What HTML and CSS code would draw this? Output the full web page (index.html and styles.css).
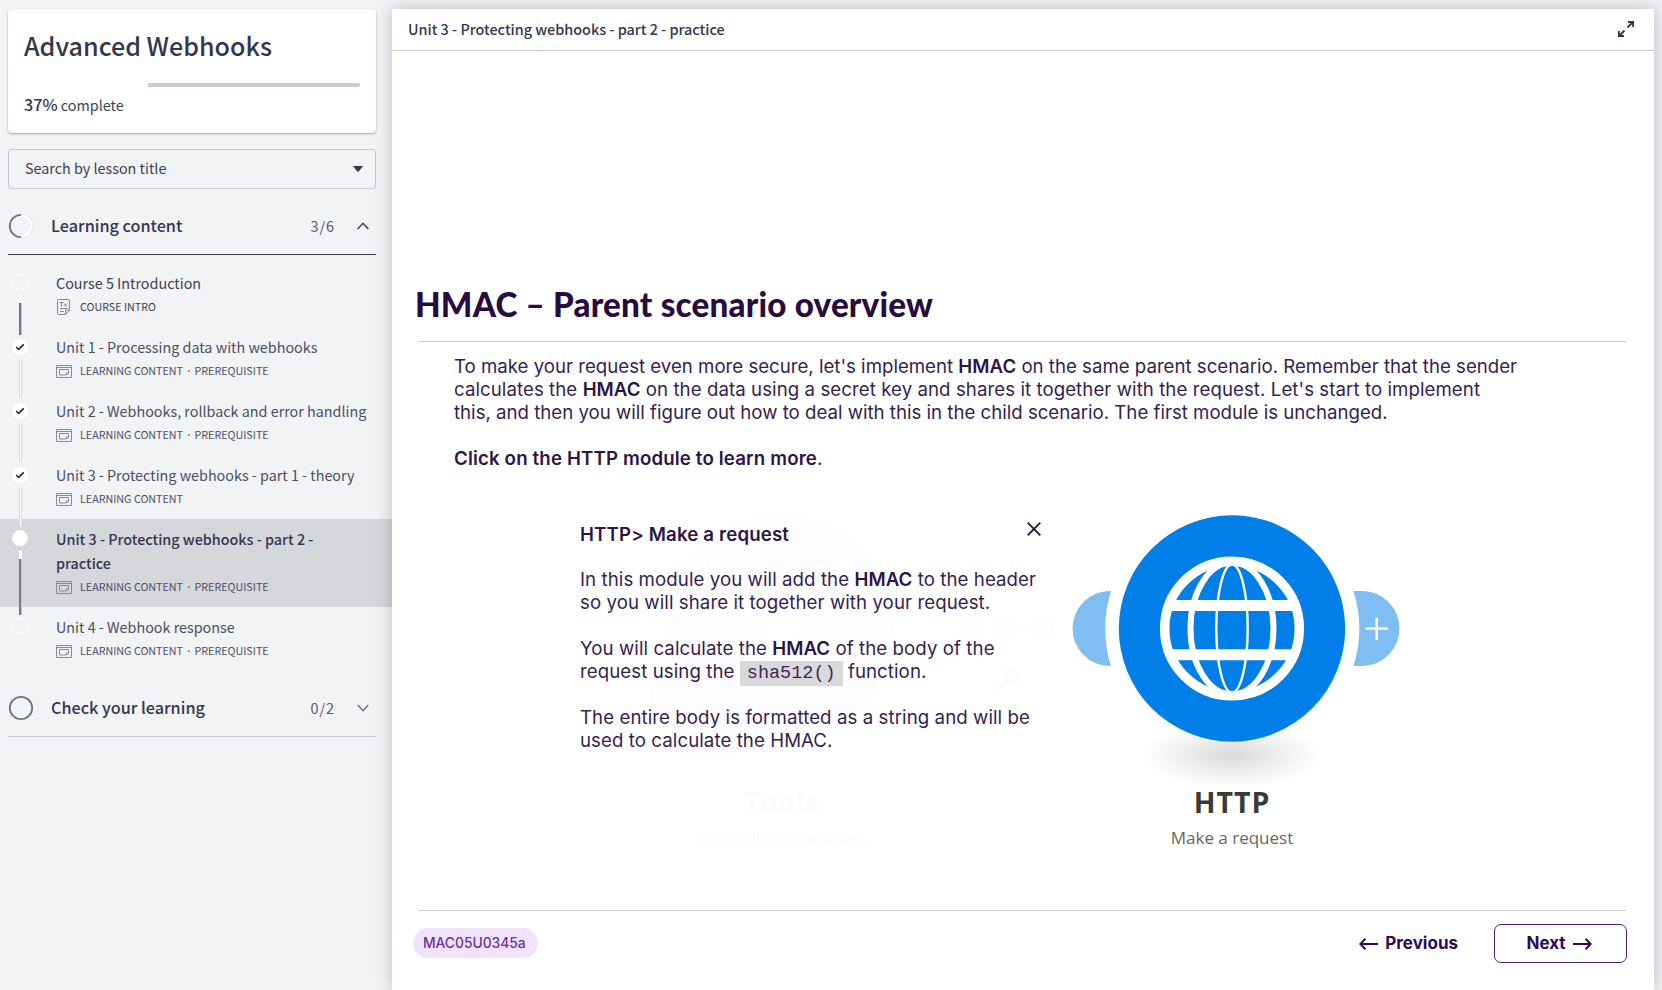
FILE: index.html
```html
<!DOCTYPE html>
<html lang="en">
<head>
<meta charset="utf-8">
<title>Advanced Webhooks</title>
<link rel="stylesheet" href="styles.css">
</head>
<body>
<svg class="sprite" width="0" height="0">
  <symbol id="ic-content" viewBox="0 0 16 13">
    <path d="M.5.5h15v12H.5zM.5 2.5h15M3.500 4.500h9v3.500l-2 2h-7zM12.500 8h-2v2" fill="none" stroke="currentColor"/>
  </symbol>
  <symbol id="ic-check" viewBox="0 0 16 16">
    <path d="M4.300 8l2.300 2.400 5.200-5" fill="none" stroke="#222" stroke-width="1.500"/>
  </symbol>
</svg>
<div class="page">
  <aside class="sidebar">
    <section class="card">
      <h1 class="card-title">Advanced Webhooks</h1>
      <div class="progress"><div class="progress-done" style="width:37%"></div></div>
      <p class="card-status"><strong>37%</strong> complete</p>
    </section>
    <div class="search"><span>Search by lesson title</span>
      <svg width="10" height="6" viewBox="0 0 10 6"><path d="M0 0h10L5.800 5.500h-1.600z" fill="#34364f"/></svg>
    </div>
    <div class="section section-open">
      <svg class="section-ring" width="26" height="26" viewBox="0 0 26 26" fill="none">
        <circle cx="13" cy="13" r="11.300" stroke="#d9dbe0" stroke-width="1.600"/><circle cx="13" cy="13" r="10.600" stroke="#fff" stroke-width="1.800"/>
        <path d="M13 1.800a11.200 11.200 0 0 0 0 22.400" stroke="#6f7187" stroke-width="1.800"/></svg>
      <h2 class="section-title">Learning content</h2>
      <span class="section-count">3/6</span>
      <svg width="12" height="8" viewBox="0 0 12 8"><path d="M.7 7L6 1.300 11.300 7" fill="none" stroke="#3d3f57" stroke-width="1.500"/></svg>
    </div>
    <ul class="lessons">
      <li class="lesson lesson-intro">
        <div class="rail"><span class="dot"></span><span class="line line-todo"></span></div>
        <div class="lesson-text"><div class="lesson-title">Course 5 Introduction</div>
          <div class="lesson-meta"><svg class="doc" width="16" height="16" viewBox="0 0 16 16" fill="none" stroke="currentColor">
            <path d="M2.500.5h9.500q1.500 0 1.500 1.500v9l-4 4.500h-7q-1 0-1-1V1.500q0-1 1-1zM13.500 11h-4v4.500M3.500 3.500h4M5.500 3.500v4M8 4.500l3 3M11 4.500l-3 3M4 9.500h7.500M4 12.500h4"/></svg>COURSE INTRO</div></div>
      </li>
      <li class="lesson">
        <div class="rail"><span class="dot dot-full dot-checked"><svg><use href="#ic-check"/></svg></span><span class="line"></span></div>
        <div class="lesson-text"><div class="lesson-title">Unit 1 - Processing data with webhooks</div>
          <div class="lesson-meta"><svg><use href="#ic-content"/></svg>LEARNING CONTENT<i>·</i>PREREQUISITE</div></div>
      </li>
      <li class="lesson">
        <div class="rail"><span class="dot dot-full dot-checked"><svg><use href="#ic-check"/></svg></span><span class="line"></span></div>
        <div class="lesson-text"><div class="lesson-title">Unit 2 - Webhooks, rollback and error handling</div>
          <div class="lesson-meta"><svg><use href="#ic-content"/></svg>LEARNING CONTENT<i>·</i>PREREQUISITE</div></div>
      </li>
      <li class="lesson">
        <div class="rail"><span class="dot dot-full dot-checked"><svg><use href="#ic-check"/></svg></span><span class="line"></span></div>
        <div class="lesson-text"><div class="lesson-title">Unit 3 - Protecting webhooks - part 1 - theory</div>
          <div class="lesson-meta"><svg><use href="#ic-content"/></svg>LEARNING CONTENT</div></div>
      </li>
      <li class="lesson lesson-active">
        <div class="rail"><span class="dot dot-full"></span><span class="line line-todo"></span></div>
        <div class="lesson-text"><div class="lesson-title">Unit 3 - Protecting webhooks - part 2 -<br>practice</div>
          <div class="lesson-meta"><svg><use href="#ic-content"/></svg>LEARNING CONTENT<i>·</i>PREREQUISITE</div></div>
      </li>
      <li class="lesson">
        <div class="rail"><span class="dot"></span></div>
        <div class="lesson-text"><div class="lesson-title">Unit 4 - Webhook response</div>
          <div class="lesson-meta"><svg><use href="#ic-content"/></svg>LEARNING CONTENT<i>·</i>PREREQUISITE</div></div>
      </li>
    </ul>
    <div class="section">
      <svg class="section-ring" width="26" height="26" viewBox="0 0 26 26" fill="none"><circle cx="13" cy="13" r="11.200" stroke="#6f7187" stroke-width="1.800"/></svg>
      <h2 class="section-title">Check your learning</h2>
      <span class="section-count">0/2</span>
      <svg width="12" height="8" viewBox="0 0 12 8"><path d="M.7 1L6 6.700 11.300 1" fill="none" stroke="#6f7187" stroke-width="1.500"/></svg>
    </div>
  </aside>

  <main class="viewer">
    <header class="viewer-head">
      <span>Unit 3 - Protecting webhooks - part 2 - practice</span>
      <svg width="16" height="16" viewBox="0 0 16 16" fill="none" stroke="#34364f" stroke-width="1.800"><path d="M9.500 6.500L15 1M10 1h5.100v5M6.500 9.500L1 15M6 15H.9v-5"/></svg>
    </header>
    <article class="slide">
      <h2 class="slide-title">HMAC – Parent scenario overview</h2>
      <div class="intro">
        <p>To make your request even more secure, let's implement <b>HMAC</b> on the same parent scenario. Remember that the sender<br><span class="loose">calculates the <b>HMAC</b> on the data using a secret key and shares it together with the request. Let's start to implement</span><br>this, and then you will figure out how to deal with this in the child scenario. The first module is unchanged.</p>
        <p><b class="prompt">Click on the HTTP module to learn more</b>.</p>
      </div>
      <div class="stage">
        <div class="ghost">
          <svg width="450" height="284" viewBox="620 500 450 284">
            <circle cx="780" cy="628.500" r="113" fill="#fdfdff"/>
            <circle cx="780" cy="625" r="20" fill="#fff"/>
            <path d="M712 560l50 50M848 560l-110 110" stroke="#fff" stroke-width="14"/>
            <circle cx="706" cy="702" r="58" fill="#fdfdff"/>
            <g fill="#fcfdff"><circle cx="971" cy="628.500" r="12"/><circle cx="1006" cy="628.500" r="12"/><circle cx="1041" cy="628.500" r="12"/></g>
            <path d="M997 689l12-11" fill="none" stroke="#fbfbfb" stroke-width="4"/><path d="M1013 670a6 6 0 1 0 4 5" fill="none" stroke="#fbfbfb" stroke-width="4"/>
          </svg>
          <div class="node-name">Tools</div>
          <div class="node-action">Set multiple variables</div>
        </div>
        <section class="panel">
          <svg class="close" width="14" height="14" viewBox="0 0 14 14"><path d="M.7.7l12.600 12.600M13.300.7L.7 13.300" stroke="#2a0f45" stroke-width="1.800"/></svg>
          <p class="panel-title"><b>HTTP&gt; Make a request</b></p>
          <p>In this module you will add the <b>HMAC</b> to the header<br>so you will share it together with your request.</p>
          <p>You will calculate the <b>HMAC</b> of the body of the<br>request using the <code>sha512()</code> function.</p>
          <p>The entire body is formatted as a string and will be<br>used to calculate the HMAC.</p>
        </section>
        <figure class="node">
          <svg width="344" height="284" viewBox="1060 500 344 284">
            <defs><radialGradient id="shade"><stop offset="0" stop-color="#d9d9d9"/><stop offset=".5" stop-color="#ededed"/><stop offset="1" stop-color="#fff"/></radialGradient></defs>
            <ellipse cx="1232" cy="755" rx="90" ry="33" fill="url(#shade)"/>
            <g fill="#80bdf3">
              <path d="M1111 591H1110A37.500 37.500 0 0 0 1110 666H1111A126 126 0 0 1 1111 591z"/>
              <path d="M1353.500 591H1362A37.500 37.500 0 0 1 1362 666H1353.500A126 126 0 0 0 1353.500 591z"/>
            </g>
            <path d="M1365.500 628.500h22.500M1376.700 617.500v22.500" stroke="#f4f9fe" stroke-width="2.600"/>
            <circle cx="1232" cy="628.500" r="113.200" fill="#007fe8"/>
            <g fill="none" stroke="#fff">
              <circle cx="1232" cy="628.500" r="67.300" stroke-width="9.500"/>
              <ellipse cx="1232" cy="628.500" rx="41.500" ry="66" stroke-width="6"/>
              <ellipse cx="1232" cy="628.500" rx="15.700" ry="64" stroke-width="2.400"/>
              <path d="M1171 605.500h122M1171 654.700h122" stroke-width="11"/>
            </g>
          </svg>
          <div class="node-name">HTTP</div>
          <figcaption class="node-action">Make a request</figcaption>
        </figure>
      </div>
      <footer class="slide-foot">
        <span class="tag">MAC05U0345a</span>
        <button class="btn"><svg width="19" height="12" viewBox="0 0 19 12"><path d="M19 6H1.500M6.500.8L1.300 6l5.200 5.200"/></svg>Previous</button>
        <button class="btn btn-outline">Next<svg width="19" height="12" viewBox="0 0 19 12"><path d="M0 6h17.500M12.500.8L17.700 6l-5.200 5.200"/></svg></button>
      </footer>
    </article>
  </main>
</div>
</body>
</html>
```
FILE: styles.css
```css
* { box-sizing: border-box; margin: 0; padding: 0; }
body {
  background: #f1f3f5;
  color: #3d3f57;
  font-family: "Noto Sans CJK SC", "Noto Sans", sans-serif;
  font-size: 14.35px;
  line-height: 24px;
  overflow: hidden;
}
.sprite { position: absolute; }
.page { display: flex; height: 990px; }

/* Sidebar */
.sidebar { width: 392px; flex: none; padding-top: 9px; }
.card {
  margin: 0 16px 0 8px;
  height: 124px;
  padding: 20px 16px 0;
  background: #fff;
  border-radius: 4px;
  box-shadow: 0 1px 2px rgba(40, 42, 60, .4);
}
.card-title { font-size: 25.1px; font-weight: 500; line-height: 32px; color: #34364f; }
.progress { margin-top: 22px; height: 4px; background: #c9cbd7; border-radius: 2px; }
.progress-done { height: 4px; background: #fff; }
.card-status { margin-top: 5px; }
.card-status strong { font-size: 16.2px; font-weight: 500; color: #34364f; }
.search {
  display: flex;
  align-items: center;
  justify-content: space-between;
  margin: 16px 16px 0 8px;
  height: 40px;
  padding: 0 12px 0 16px;
  border: 1px solid #c6c8d5;
  border-radius: 3px;
}
.search span { padding-bottom: 2px; }
.section {
  display: flex;
  align-items: center;
  margin: 0 16px 0 8px;
  height: 58px;
  padding-right: 7px;
  border-bottom: 1px solid #c6c8d5;
}
.section-open { margin-top: 8px; border-color: #34364f; }
.section-title { margin-left: 17px; padding-bottom: 2px; font-size: 16.2px; font-weight: 500; color: #34364f; }
.section-count { margin: 1px 22px 0 auto; letter-spacing: 1px; color: #55576c; }
.lessons { list-style: none; margin: 8px 0 8px; }
.lesson { display: flex; color: #4c4e64; }
.rail {
  position: relative;
  z-index: 1;
  width: 56px;
  flex: none;
  display: flex;
  flex-direction: column;
  padding: 11px 0 0 12px;
}
.dot { width: 16px; height: 16px; flex: none; border: 1px solid #fff; border-radius: 50%; }
.dot-full { background: #fff; }
.dot-checked { margin: 1px 0 -1px; }
.dot svg { display: block; width: 16px; height: 16px; margin: -1px; }
.line {
  flex: 1;
  width: 3px;
  margin: 5px 0 -8px 7px;
  background: #fff;
  border: solid #d9dbdf;
  border-width: 0 1px;
}
.line-todo {
  border: 0;
  background: linear-gradient(#fff 8px, transparent 8px), linear-gradient(90deg, #73758a 2px, #c9cad2 2px);
}
.lesson-text { padding: 8px 0; }
.lesson-title { white-space: nowrap; }
.lesson-meta { display: flex; align-items: center; font-size: 10.72px; }
.lesson-meta svg { width: 16px; height: 13px; margin-right: 8px; color: #85879a; }
.lesson-meta .doc { height: 16px; }
.lesson-meta i { width: 11.5px; text-align: center; font: 12px "Noto Sans", sans-serif; }
.lesson-intro { color: #3d3f57; }
.lesson-active { background: #d5d7db; }
.lesson-active .lesson-title { font-weight: 500; color: #34364f; }

/* Viewer */
.viewer {
  position: relative;
  z-index: 2;
  width: 1262px;
  margin-top: 9px;
  background: #fff;
  box-shadow: 0 0 16px rgba(30, 32, 50, .26);
}
.viewer-head {
  display: flex;
  align-items: center;
  justify-content: space-between;
  height: 42px;
  padding: 0 20px 1px 16px;
  border-bottom: 1px solid #c9cbd7;
  font-size: 14.4px;
  font-weight: 500;
  color: #34364f;
}
.slide {
  padding: 233px 28px 0 27px;
  color: #361e52;
  font: 400 18.65px/23px Inter, sans-serif;
}
.slide-title {
  padding-bottom: 17px;
  border-bottom: 1px solid #cdc8c8;
  text-indent: -4px;
  color: #280b41;
  font: 900 33.2px/40px Lato, sans-serif;
  letter-spacing: .2px;
}
.intro { padding: 13px 0 0 35px; white-space: nowrap; }
.loose { letter-spacing: .07px; }
.slide p + p { margin-top: 23px; }
.slide b { font-weight: 600; color: #2d1548; letter-spacing: .05px; }
.slide .prompt { letter-spacing: .16px; }
.stage { position: relative; display: flex; height: 410px; margin-top: 30px; padding-left: 161px; }
.ghost { position: absolute; left: 202px; top: 0; width: 450px; }
.ghost svg { display: block; }
.ghost div { width: 320px; text-align: center; }
.panel { position: relative; width: 480px; padding-top: 23px; white-space: nowrap; letter-spacing: .08px; }
.panel .panel-title { margin-bottom: -1px; }
.panel-title b { letter-spacing: .16px; }
.close { position: absolute; left: 446.5px; top: 22px; }
code {
  padding: 2px 7px;
  background: #d9d9d9;
  color: #3d2757;
  font: 18.5px/16px "Liberation Mono", monospace;
  letter-spacing: 0;
}
.node { position: relative; width: 344px; text-align: center; }
.node svg { display: block; }
.node-name { font: 700 28.5px/36px "Open Sans", sans-serif; letter-spacing: 1px; color: #3a3a3a; }
.node-action { margin-top: 6px; font: 17px/24px "Open Sans", sans-serif; color: #666; }
.ghost .node-name, .ghost .node-action { color: #fbfbfb; }
.ghost .node-name { letter-spacing: 0; }
.slide-foot {
  display: flex;
  align-items: center;
  border-top: 1px solid #cdc8c8;
  padding-top: 13px;
}
.tag {
  margin: 0 auto 0 -6px;
  height: 30px;
  padding: 0 12px 0 10px;
  border-radius: 15px;
  background: #f0e3fb;
  color: #6c2fa3;
  font-size: 13.8px;
  font-weight: 500;
  line-height: 30px;
}
.btn {
  display: flex;
  align-items: center;
  gap: 7px;
  height: 39px;
  border: 0;
  background: none;
  color: #32075c;
  font: 700 17px/23px Inter, sans-serif;
}
.btn path { fill: none; stroke: #32075c; stroke-width: 2; }
.btn-outline {
  justify-content: center;
  width: 133px;
  margin: 0 -1px 0 36px;
  padding-right: 3px;
  border: 1.5px solid #4b2474;
  border-radius: 7px;
}
.slide-foot .tag { margin-bottom: 1px; }
```
